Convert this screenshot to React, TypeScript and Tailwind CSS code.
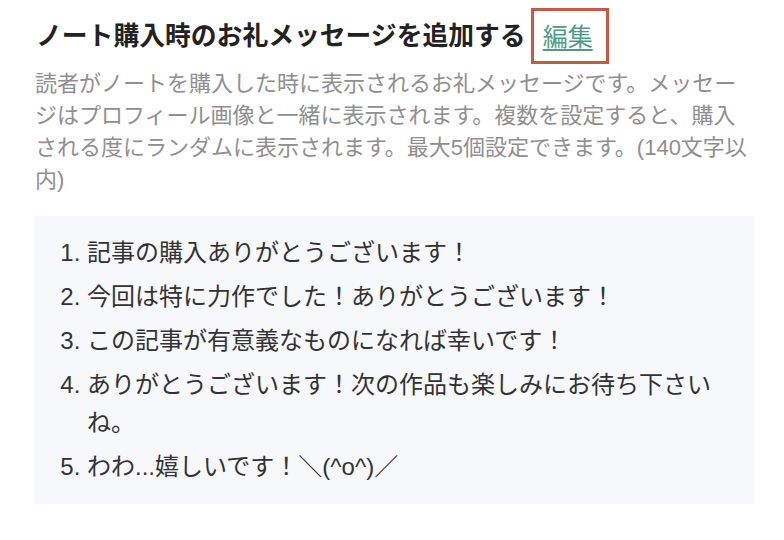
import React from "react";

const items = [
  "記事の購入ありがとうございます！",
  "今回は特に力作でした！ありがとうございます！",
  "この記事が有意義なものになれば幸いです！",
  "ありがとうございます！次の作品も楽しみにお待ち下さいね。",
  "わわ...嬉しいです！＼(^o^)／",
];

export default function App() {
  return (
    <div
      className="w-[784px] h-[540px] bg-white pl-[34px] pr-[30px] pt-[8px]"
      style={{ fontFamily: '"Liberation Sans", "Noto Sans CJK JP", sans-serif' }}
    >
      <div className="flex items-center h-[56px] pl-[2px]">
        <h2 className="text-[25.8px] font-bold leading-[40px] text-[#222222] whitespace-nowrap">
          ノート購入時のお礼メッセージを追加する
        </h2>
        <span className="ml-[5px] border-[3px] border-[#c65a45] pl-[9px] pr-[13px] pt-[10px] pb-[8px] h-[56px] box-border">
          <a
            href="#"
            className="block text-[25px] leading-[32px] text-[#4f9c85] underline underline-offset-[3px] decoration-[1.5px]"
          >
            編集
          </a>
        </span>
      </div>
      <p className="mt-[4px] pl-[1px] text-[22px] leading-[32px] text-[#8f8f8f]">
        読者がノートを購入した時に表示されるお礼メッセージです。メッセージはプロフィール画像と一緒に表示されます。複数を設定すると、購入される度にランダムに表示されます。最大5個設定できます。(140文字以内)
      </p>
      <div className="mt-[20px] h-[288px] bg-[#f7f8fa] pt-[18px] pr-[30px]">
        <ol className="list-decimal pl-[53px] text-[24px] leading-[38px] text-[#333333]">
          {items.map((t) => (
            <li key={t} className="mb-[6px]">
              {t}
            </li>
          ))}
        </ol>
      </div>
    </div>
  );
}
